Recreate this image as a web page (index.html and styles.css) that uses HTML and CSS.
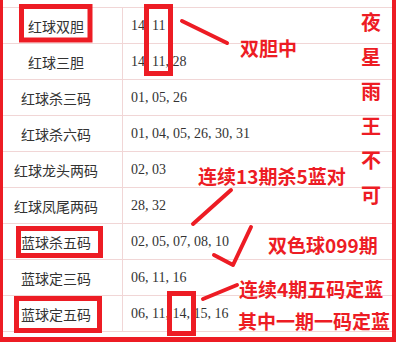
FILE: index.html
```html
<!DOCTYPE html>
<html lang="zh">
<head>
<meta charset="utf-8">
<title>双色球099期</title>
<link rel="stylesheet" href="styles.css">
</head>
<body>
<div class="page">
  <div class="frame">
    <div class="table">
      <div class="row"><div class="name">红球双胆</div><div class="nums">14, 11</div></div>
      <div class="row"><div class="name">红球三胆</div><div class="nums">14, 11, 28</div></div>
      <div class="row"><div class="name">红球杀三码</div><div class="nums">01, 05, 26</div></div>
      <div class="row"><div class="name">红球杀六码</div><div class="nums">01, 04, 05, 26, 30, 31</div></div>
      <div class="row"><div class="name">红球龙头两码</div><div class="nums">02, 03</div></div>
      <div class="row"><div class="name">红球凤尾两码</div><div class="nums">28, 32</div></div>
      <div class="row"><div class="name">蓝球杀五码</div><div class="nums">02, 05, 07, 08, 10</div></div>
      <div class="row"><div class="name">蓝球定三码</div><div class="nums">06, 11, 16</div></div>
      <div class="row"><div class="name">蓝球定五码</div><div class="nums">06, 11, 14, 15, 16</div></div>
    </div>
  </div>
  <svg class="marks" width="396" height="343" viewBox="0 0 396 343">
    <g fill="none" stroke="#ed1c24" stroke-width="5">
      <rect x="21.5" y="6.5" width="68.5" height="33.5"/>
      <rect x="146.5" y="6.5" width="24" height="67"/>
      <rect x="18.5" y="228.5" width="82" height="27"/>
      <rect x="16.5" y="298.5" width="83" height="32"/>
      <rect x="169.5" y="293.5" width="24" height="40"/>
    </g>
    <g fill="none" stroke="#ed1c24" stroke-width="4" stroke-linecap="round" stroke-linejoin="round">
      <line x1="182" y1="21" x2="227" y2="43"/>
      <line x1="231" y1="190" x2="193" y2="224"/>
      <polyline points="214,255 233,265 251,227"/>
      <line x1="203" y1="299" x2="237" y2="285"/>
    </g>
  </svg>
  <div class="note note-dan">双胆中</div>
  <div class="vert">夜星雨王不可</div>
  <div class="note note-kill">连续13期杀5蓝对</div>
  <div class="note note-issue">双色球099期</div>
  <div class="note note-four">连续4期五码定蓝</div>
  <div class="note note-one">其中一期一码定蓝</div>
</div>
</body>
</html>
```
FILE: styles.css
```css
body {
  margin: 0;
  background: #fff;
}

.page {
  position: relative;
  width: 396px;
  height: 343px;
  overflow: hidden;
  background: #fff;
}

.frame {
  box-sizing: border-box;
  height: 342px;
  border-left: 3px solid #ed1c24;
  border-right: 4px solid #ed1c24;
  border-bottom: 5px solid #ed1c24;
  padding-top: 7px;
}

.table {
  border-top: 1px solid #f1d6d6;
}

.row {
  display: flex;
  height: 36px;
  box-sizing: border-box;
  border-bottom: 1px solid #f1d6d6;
}

.name {
  width: 120px;
  box-sizing: border-box;
  border-right: 1px solid #f1d6d6;
  padding-right: 13px;
  display: flex;
  align-items: center;
  justify-content: center;
  font: 14px "Noto Sans CJK SC", sans-serif;
  color: #333;
}

.nums {
  flex: 1;
  padding-left: 8px;
  display: flex;
  align-items: center;
  font: 14px "Liberation Serif", serif;
  color: #333;
}

.marks {
  position: absolute;
  left: 0;
  top: 0;
}

.note {
  position: absolute;
  font: 700 19px/1 "Noto Sans CJK SC", sans-serif;
  color: #ed1c24;
  white-space: nowrap;
}

.note-dan { left: 240px; top: 38px; }
.note-kill { left: 198px; top: 166px; }
.note-issue { left: 268px; top: 235px; }
.note-four { left: 239px; top: 279px; }
.note-one { left: 238px; top: 311px; }

.vert {
  position: absolute;
  left: 361px;
  top: 5px;
  width: 20px;
  font: 700 20px/34.6px "Noto Sans CJK SC", sans-serif;
  color: #ed1c24;
  word-break: break-all;
}
```
